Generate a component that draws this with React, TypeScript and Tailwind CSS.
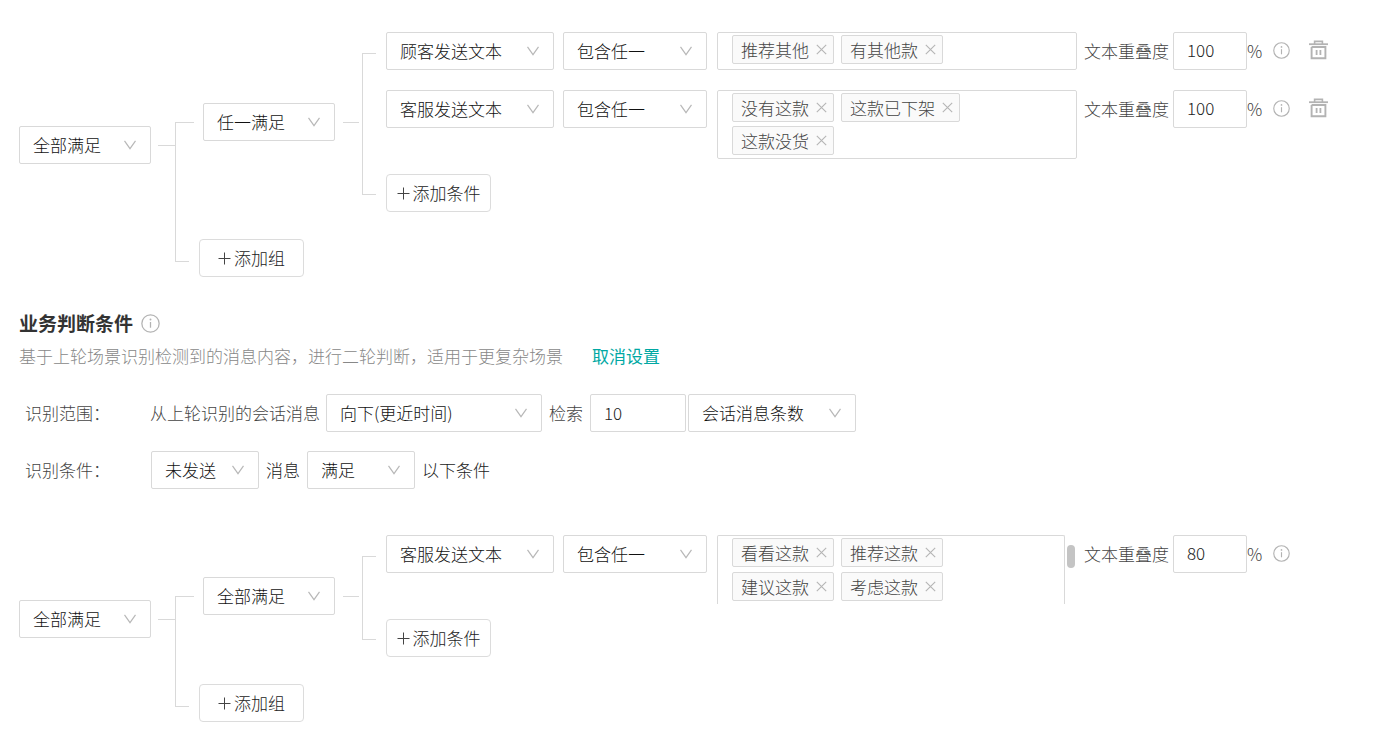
import type { ReactNode } from 'react';

const ALL_ANY = ['全部满足', '任一满足'];
const SOURCES = ['顾客发送文本', '客服发送文本'];
const MATCHES = ['包含任一', '包含全部'];

function Chevron() {
  return (
    <svg viewBox="0 0 12 10" className="pointer-events-none absolute top-1/2 right-[15px] h-[10px] w-[12px] -translate-y-1/2" fill="none" stroke="#b8b8b8" strokeWidth="1.2">
      <path d="M0.5 0.8 L6 8.6 L11.5 0.8" />
    </svg>
  );
}

function Select({ label, value, options, width }: { label: string; value: string; options: string[]; width: string }) {
  return (
    <span className={`relative block shrink-0 ${width}`}>
      <select
        aria-label={label}
        defaultValue={value}
        className="block h-[38px] w-full appearance-none rounded-xs border border-[#d9d9d9] bg-white pr-8 pl-[13px] text-[#111] outline-none"
      >
        {options.map((o) => (
          <option key={o}>{o}</option>
        ))}
      </select>
      <Chevron />
    </span>
  );
}

function InfoIcon({ size }: { size: string }) {
  return (
    <svg viewBox="0 0 18 18" className={`shrink-0 ${size}`} fill="none" stroke="#b3b3b3">
      <circle cx="9" cy="9" r="8.2" strokeWidth="1.2" />
      <path d="M9 7.6V13" strokeWidth="1.2" />
      <circle cx="9" cy="5.2" r="0.9" fill="#b3b3b3" stroke="none" />
    </svg>
  );
}

function TrashIcon() {
  return (
    <svg viewBox="0 0 19 20" className="h-[20px] w-[19px]" fill="none" stroke="#b3b3b3">
      <path d="M0 4.2H19" strokeWidth="1.8" />
      <path d="M5.6 4V1.4H13.4V4" strokeWidth="1.6" />
      <path d="M2.6 7V18.2H16.4V7H2.6" strokeWidth="1.9" />
      <path d="M7.6 10V15M11.4 10V15" strokeWidth="1.8" />
    </svg>
  );
}

function AddButton({ children }: { children: ReactNode }) {
  return (
    <button type="button" className="flex h-[38px] w-[105px] items-center justify-center gap-[3px] rounded border border-[#dcdcdc] bg-white text-[#222]">
      <svg viewBox="0 0 13 13" className="size-[13px]" stroke="#444" strokeWidth="1">
        <path d="M0.5 6.5H12.5M6.5 0.5V12.5" />
      </svg>
      {children}
    </button>
  );
}

function Tag({ text }: { text: string }) {
  return (
    <li className="flex h-[29px] items-center gap-[7px] rounded-xs border border-[#d9d9d9] bg-[#fafafa] pr-[6px] pl-[8px] text-[#444]">
      {text}
      <button type="button" aria-label={`移除${text}`}>
        <svg viewBox="0 0 11 11" className="size-[11px]" stroke="#b5b5b5" strokeWidth="1.1">
          <path d="M0.8 0.8L10.2 10.2M10.2 0.8L0.8 10.2" />
        </svg>
      </button>
    </li>
  );
}

type Rule = { source: string; tags: string[]; overlap: number; scrolls?: boolean; removable?: boolean };

function RuleRow({ rule }: { rule: Rule }) {
  const { source, tags, overlap, scrolls, removable } = rule;
  return (
    <div className="flex min-h-[43px] items-start">
      <Select label="消息来源" value={source} options={SOURCES} width="w-[168px]" />
      <div className="ml-[9px]">
        <Select label="匹配方式" value="包含任一" options={MATCHES} width="w-[144px]" />
      </div>
      <div className="ml-[10px] flex max-h-[69px] w-[360px] shrink-0 items-start gap-[2px] overflow-hidden">
        <ul
          className={`flex min-h-[38px] flex-1 flex-wrap content-start gap-x-[7px] border-[#d9d9d9] px-[14px] pt-[2px] pb-[3px] ${
            scrolls ? 'gap-y-[5px] rounded-t-xs border-x border-t' : 'gap-y-[4px] rounded-xs border'
          }`}
        >
          {tags.map((t) => (
            <Tag key={t} text={t} />
          ))}
        </ul>
        {scrolls && <div className="mt-[10px] mr-[2px] h-[23px] w-[8px] rounded-full bg-[#c4c4c4]" />}
      </div>
      <div className="ml-[7px] flex shrink-0 items-start leading-[38px] text-[#444]">
        <label className="flex items-start gap-[4px]">
          文本重叠度
          <input
            type="text"
            defaultValue={overlap}
            className="h-[38px] w-[74px] rounded-xs border border-[#d9d9d9] pb-[2px] pl-[13px] text-[#222] outline-none"
          />
        </label>
        %
        <span className="mt-[10px] ml-[11px]">
          <InfoIcon size="size-[17px]" />
        </span>
        {removable && (
          <button type="button" aria-label="删除条件" className="mt-[8px] ml-[19px]">
            <TrashIcon />
          </button>
        )}
      </div>
    </div>
  );
}

function Group({ mode, rules }: { mode: string; rules: Rule[] }) {
  return (
    <div className="flex items-center">
      <Select label="组内关系" value={mode} options={ALL_ANY} width="w-[132px]" />
      <span className="mr-[3px] ml-[8px] w-[16px] border-t border-[#d9d9d9]" />
      <div>
        {rules.map((rule, i) => (
          <div key={i} className="flex gap-[10px]">
            <span className={`w-[14px] border-l border-[#d9d9d9] ${i === 0 ? 'mt-[21px] border-t' : ''}`} />
            <div className="pb-[15px]">
              <RuleRow rule={rule} />
            </div>
          </div>
        ))}
        <div className="flex gap-[10px]">
          <span className="mb-[17px] w-[14px] border-b border-l border-[#d9d9d9]" />
          <AddButton>添加条件</AddButton>
        </div>
      </div>
    </div>
  );
}

function ConditionTree({ mode, rules }: { mode: string; rules: Rule[] }) {
  return (
    <div className="flex items-center">
      <div className="flex items-center pb-[19px]">
        <Select label="组间关系" value="全部满足" options={ALL_ANY} width="w-[132px]" />
        <span className="ml-[7px] w-[17px] border-t border-[#d9d9d9]" />
      </div>
      <div>
        <div className="flex gap-[9px]">
          <span className="flex w-[19px] flex-col">
            <span className="flex-1" />
            <span className="flex-1 border-t border-l border-[#d9d9d9]" />
          </span>
          <Group mode={mode} rules={rules} />
        </div>
        <div className="flex gap-[10px]">
          <span className="mb-[15px] w-[14px] border-b border-l border-[#d9d9d9]" />
          <div className="pt-[27px]">
            <AddButton>添加组</AddButton>
          </div>
        </div>
      </div>
    </div>
  );
}

export default function App() {
  return (
    <main className="min-h-screen overflow-x-auto bg-white pt-[32px] pb-[15px] pl-[19px] font-['Noto_Sans_CJK_SC',sans-serif] text-[17px] leading-[24px] font-light whitespace-nowrap text-[#444]">
      <ConditionTree
        mode="任一满足"
        rules={[
          { source: '顾客发送文本', tags: ['推荐其他', '有其他款'], overlap: 100, removable: true },
          { source: '客服发送文本', tags: ['没有这款', '这款已下架', '这款没货'], overlap: 100, removable: true },
        ]}
      />

      <section className="mt-[32px] mb-[46px]">
        <h2 className="flex items-center gap-[8px] text-[19px] leading-[28px] font-bold text-[#333]">
          业务判断条件
          <InfoIcon size="size-[19px]" />
        </h2>
        <p className="mt-[7px] flex gap-[29px] text-[#888]">
          基于上轮场景识别检测到的消息内容，进行二轮判断，适用于更复杂场景
          <a href="#" className="font-normal text-[#00a8a3]">取消设置</a>
        </p>

        <div className="mt-[26px] flex items-center pl-[6px]">
          <span className="w-[125px]">识别范围：</span>
          <span className="mr-[6px]">从上轮识别的会话消息</span>
          <Select label="检索方向" value="向下(更近时间)" options={['向下(更近时间)', '向上(更早时间)']} width="w-[216px]" />
          <label className="ml-[7px] flex items-center gap-[7px]">
            检索
            <input type="text" defaultValue="10" className="h-[38px] w-[96px] rounded-xs border border-[#d9d9d9] pb-[2px] pl-[13px] text-[#222] outline-none" />
          </label>
          <span className="w-[2px]" />
          <Select label="检索单位" value="会话消息条数" options={['会话消息条数', '会话时间']} width="w-[168px]" />
        </div>

        <div className="mt-[19px] flex items-center gap-[7px] pl-[6px] text-[#222]">
          <span className="w-[119px] text-[#444]">识别条件：</span>
          <Select label="发送状态" value="未发送" options={['未发送', '已发送']} width="w-[108px]" />
          消息
          <Select label="满足状态" value="满足" options={['满足', '不满足']} width="w-[108px]" />
          以下条件
        </div>
      </section>

      <ConditionTree
        mode="全部满足"
        rules={[{ source: '客服发送文本', tags: ['看看这款', '推荐这款', '建议这款', '考虑这款'], overlap: 80, scrolls: true }]}
      />
    </main>
  );
}
